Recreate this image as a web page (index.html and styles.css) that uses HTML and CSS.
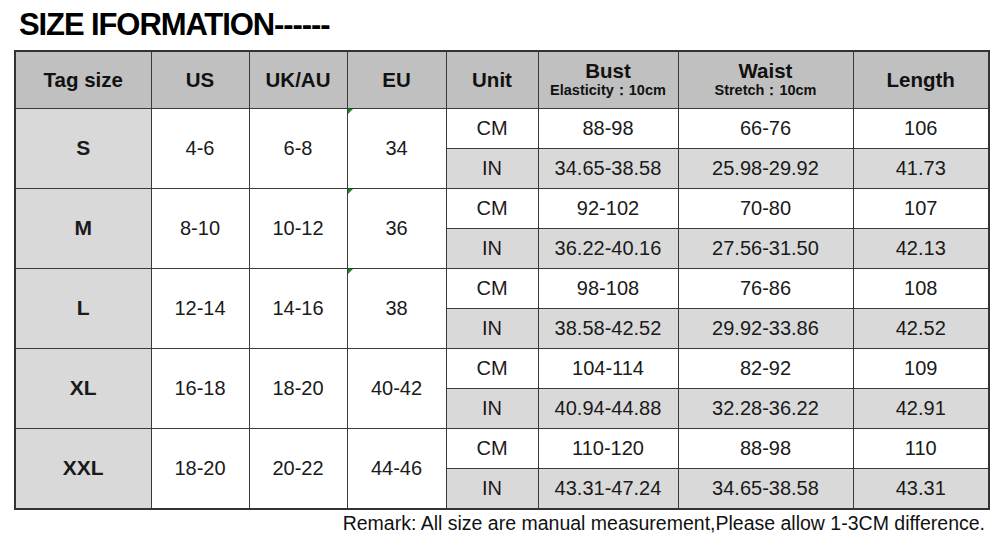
FILE: index.html
```html
<!DOCTYPE html>
<html>
<head>
<meta charset="utf-8">
<link rel="stylesheet" href="styles.css">
</head>
<body>
<div class="page">
  <h1 class="title">SIZE IFORMATION------</h1>
  <table class="chart">
    <colgroup>
      <col class="c1"><col class="c2"><col class="c3"><col class="c4"><col class="c5"><col class="c6"><col class="c7"><col class="c8">
    </colgroup>
    <thead>
      <tr>
        <th>Tag size</th><th>US</th><th>UK/AU</th><th>EU</th><th>Unit</th>
        <th><div>Bust</div><div class="sub">Elasticity：10cm</div></th>
        <th><div>Waist</div><div class="sub">Stretch：10cm</div></th>
        <th>Length</th>
      </tr>
    </thead>
    <tbody>
      <tr class="cm"><td rowspan="2" class="tag">S</td><td rowspan="2">4-6</td><td rowspan="2">6-8</td><td rowspan="2" class="eu"><span class="mark"></span>34</td><td>CM</td><td>88-98</td><td>66-76</td><td>106</td></tr>
      <tr class="in"><td>IN</td><td>34.65-38.58</td><td>25.98-29.92</td><td>41.73</td></tr>
      <tr class="cm"><td rowspan="2" class="tag">M</td><td rowspan="2">8-10</td><td rowspan="2">10-12</td><td rowspan="2" class="eu"><span class="mark"></span>36</td><td>CM</td><td>92-102</td><td>70-80</td><td>107</td></tr>
      <tr class="in"><td>IN</td><td>36.22-40.16</td><td>27.56-31.50</td><td>42.13</td></tr>
      <tr class="cm"><td rowspan="2" class="tag">L</td><td rowspan="2">12-14</td><td rowspan="2">14-16</td><td rowspan="2" class="eu"><span class="mark"></span>38</td><td>CM</td><td>98-108</td><td>76-86</td><td>108</td></tr>
      <tr class="in"><td>IN</td><td>38.58-42.52</td><td>29.92-33.86</td><td>42.52</td></tr>
      <tr class="cm"><td rowspan="2" class="tag">XL</td><td rowspan="2">16-18</td><td rowspan="2">18-20</td><td rowspan="2">40-42</td><td>CM</td><td>104-114</td><td>82-92</td><td>109</td></tr>
      <tr class="in"><td>IN</td><td>40.94-44.88</td><td>32.28-36.22</td><td>42.91</td></tr>
      <tr class="cm"><td rowspan="2" class="tag">XXL</td><td rowspan="2">18-20</td><td rowspan="2">20-22</td><td rowspan="2">44-46</td><td>CM</td><td>110-120</td><td>88-98</td><td>110</td></tr>
      <tr class="in last"><td>IN</td><td>43.31-47.24</td><td>34.65-38.58</td><td>43.31</td></tr>
    </tbody>
  </table>
  <p class="remark">Remark: All size are manual measurement,Please allow 1-3CM difference.</p>
</div>
</body>
</html>
```

FILE: styles.css
```css
* { box-sizing: border-box; }
html, body { margin: 0; padding: 0; background: #fff; }
body { font-family: "Liberation Sans", Arial, sans-serif; color: #111; }
.page { width: 1000px; height: 540px; padding: 6px 0 0 14px; }
.title {
  margin: 0 0 0 5px;
  font-size: 31px;
  font-weight: bold;
  letter-spacing: -1.1px;
  line-height: 38px;
  height: 44px;
  color: #000;
}
.chart {
  border-collapse: collapse;
  table-layout: fixed;
  width: 974px;
  border: 2px solid #333;
}
.c1 { width: 136px; } .c2 { width: 98px; } .c3 { width: 98px; } .c4 { width: 99px; }
.c5 { width: 92px; } .c6 { width: 140px; } .c7 { width: 175px; } .c8 { width: 136px; }
.chart th, .chart td {
  border: 1.5px solid #3a3a3a;
  text-align: center;
  vertical-align: middle;
  padding: 0;
}
.chart th {
  background: #c0c0c0;
  height: 57px;
  font-size: 20.5px;
  font-weight: bold;
  line-height: 22px;
}
.chart th .sub { font-size: 14.5px; line-height: 17px; }
.chart td { font-size: 20px; height: 40px; color: #1a1a1a; }
.chart tr.last td { height: 41px; }
.chart td.tag { background: #d9d9d9; font-weight: bold; font-size: 21px; }
.chart tr.in td { background: #d9d9d9; }
.chart td.eu { position: relative; }
.mark {
  position: absolute;
  left: 0;
  top: 0;
  width: 0;
  height: 0;
  border-top: 5px solid #1a8a1a;
  border-right: 5px solid transparent;
}
.remark {
  margin: 2px 0 0 0;
  width: 971px;
  text-align: right;
  font-size: 19.5px;
  line-height: 22px;
  color: #111;
}
```
